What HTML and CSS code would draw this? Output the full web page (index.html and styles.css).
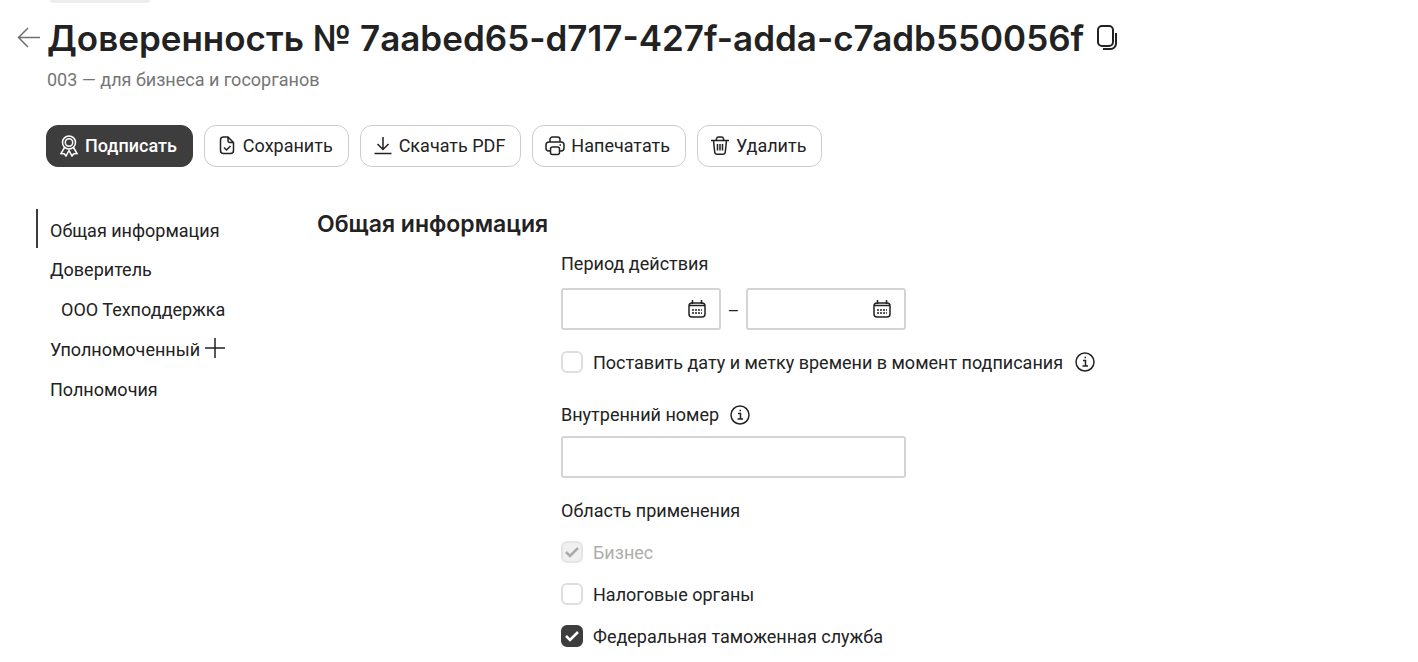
FILE: index.html
```html
<!DOCTYPE html>
<html lang="ru">
  <head>
    <meta charset="utf-8">
    <meta name="viewport" content="width=device-width, initial-scale=1">
    <title>Доверенность</title>
    <link rel="stylesheet" href="styles.css">
  </head>
  <body>
    <header class="header">
      <div class="status"></div>
      <div class="title-row">
        <a class="back" href="#" aria-label="Назад">
          <svg width="24" height="24" viewBox="0 0 24 24"><path d="M23 11.500H2M11 2L1.500 11.500 11 21"/></svg>
        </a>
        <h1 class="title">Доверенность № 7aabed65-d717-427f-adda-c7adb550056f</h1>
        <button class="copy" type="button" aria-label="Скопировать">
          <svg width="22" height="26" viewBox="0 0 22 26"><rect x="2" y="1" width="15" height="20" rx="4"/><path d="M20 8v10.500a5.500 5.500 0 0 1-5.500 5.500H7"/></svg>
        </button>
      </div>
      <p class="subtitle">003 — для бизнеса и госорганов</p>
    </header>

    <div class="toolbar">
      <button class="btn btn-dark" type="button">
        <svg width="20" height="22" viewBox="0 0 20 22"><circle cx="10" cy="7.500" r="6.500"/><circle cx="10" cy="7.500" r="3.700"/><path d="M5.500 12.500L2 18.500l3.200.2L7 21l3-5.500 3 5.500 1.800-2.300 3.200-.2-3.500-6"/></svg>
        Подписать
      </button>
      <button class="btn" type="button">
        <svg width="20" height="22" viewBox="0 0 20 22"><path d="M11 2H6.500a3 3 0 0 0-3 3v10.500a3 3 0 0 0 3 3h7a3 3 0 0 0 3-3V7.500zv3.500a2 2 0 0 0 2 2h3.500M7 12.500l2.500 2.500 4-4"/></svg>
        Сохранить
      </button>
      <button class="btn" type="button">
        <svg width="20" height="22" viewBox="0 0 20 22"><path d="M10 2v12.500M4.500 9l5.500 5.500L15.500 9M1.500 18.500h17"/></svg>
        Скачать PDF
      </button>
      <button class="btn" type="button">
        <svg width="20" height="22" viewBox="0 0 20 22"><path d="M5 7V4.500A2.500 2.500 0 0 1 7.500 2h5A2.500 2.500 0 0 1 15 4.500V7M5.500 16H4a3 3 0 0 1-3-3v-3a3 3 0 0 1 3-3h12a3 3 0 0 1 3 3v3a3 3 0 0 1-3 3h-1.500M14.500 10h1.500"/><rect x="5.500" y="12" width="9" height="7.500" rx="2"/></svg>
        Напечатать
      </button>
      <button class="btn" type="button">
        <svg width="20" height="22" viewBox="0 0 20 22"><path d="M1 5.500h18M6 5.500l.8-2.500a1.500 1.500 0 0 1 1.400-1h3.600a1.500 1.500 0 0 1 1.400 1l.8 2.500M3.500 5.500l1.200 11.500a2.500 2.500 0 0 0 2.500 2.200h5.600a2.500 2.500 0 0 0 2.500-2.200l1.200-11.500M7.500 9v6.500M10 9v6.500M12.500 9v6.500"/></svg>
        Удалить
      </button>
    </div>

    <div class="content">
      <nav class="menu">
        <a class="menu-item active" href="#general">Общая информация</a>
        <a class="menu-item" href="#">Доверитель</a>
        <a class="menu-item sub" href="#">ООО Техподдержка</a>
        <div class="menu-row">
          <a class="menu-item" href="#">Уполномоченный</a>
          <button class="add" type="button" aria-label="Добавить">
            <svg width="20" height="20" viewBox="0 0 20 20"><path d="M10 0v20M0 10h20"/></svg>
          </button>
        </div>
        <a class="menu-item" href="#">Полномочия</a>
      </nav>

      <main class="main" id="general">
        <h2 class="section-title">Общая информация</h2>
        <form class="form">
          <label class="label" for="date-from">Период действия</label>
          <div class="period">
            <div class="date">
              <input class="input" type="text" id="date-from">
              <button class="calendar" type="button" aria-label="Открыть календарь">
                <svg width="18" height="18" viewBox="0 0 18 18"><rect x="1" y="3" width="16" height="14" rx="3"/><path d="M1 5.500h16M4.500 0v4M13.500 0v4"/><path class="dots" d="M4 10h10M4 13h10"/></svg>
              </button>
            </div>
            <span class="dash">–</span>
            <div class="date">
              <input class="input" type="text" id="date-to" aria-label="Дата окончания">
              <button class="calendar" type="button" aria-label="Открыть календарь">
                <svg width="18" height="18" viewBox="0 0 18 18"><rect x="1" y="3" width="16" height="14" rx="3"/><path d="M1 5.500h16M4.500 0v4M13.500 0v4"/><path class="dots" d="M4 10h10M4 13h10"/></svg>
              </button>
            </div>
          </div>
          <div class="check-row stamp">
            <input class="checkbox" type="checkbox" id="stamp">
            <label for="stamp">Поставить дату и метку времени в момент подписания</label>
            <button class="info" type="button" aria-label="Подсказка">
              <svg width="20" height="20" viewBox="0 0 20 20"><circle cx="10" cy="10" r="9"/><path d="M8 8.500h2.500V14M7.500 14h5.500M9.500 5.500h1.500"/></svg>
            </button>
          </div>

          <div class="label-row">
            <label class="label" for="number">Внутренний номер</label>
            <button class="info" type="button" aria-label="Подсказка">
              <svg width="20" height="20" viewBox="0 0 20 20"><circle cx="10" cy="10" r="9"/><path d="M8 8.500h2.500V14M7.500 14h5.500M9.500 5.500h1.500"/></svg>
            </button>
          </div>
          <input class="input number" type="text" id="number">

          <fieldset class="scope">
            <legend class="label">Область применения</legend>
            <div class="check-row">
              <input class="checkbox" type="checkbox" id="business" checked disabled>
              <label for="business">Бизнес</label>
            </div>
            <div class="check-row">
              <input class="checkbox" type="checkbox" id="tax">
              <label for="tax">Налоговые органы</label>
            </div>
            <div class="check-row">
              <input class="checkbox" type="checkbox" id="customs" checked>
              <label for="customs">Федеральная таможенная служба</label>
            </div>
          </fieldset>
        </form>
      </main>
    </div>
  </body>
</html>
```

FILE: styles.css
```css
* {
  margin: 0;
  padding: 0;
  box-sizing: border-box;
}
body {
  background-color: #fff;
  color: #222;
  font-family: Roboto, "Liberation Sans", sans-serif;
  font-size: 18px;
  line-height: 24px;
}
button,
input {
  font: inherit;
  color: inherit;
}
button {
  background: none;
  border: none;
  cursor: pointer;
}
a {
  color: inherit;
  text-decoration: none;
}
svg {
  display: block;
  flex: none;
  fill: none;
  stroke: currentColor;
  stroke-width: 1.5;
}
.header {
  padding-left: 47px;
}
.status {
  width: 100px;
  height: 3px;
  margin-left: 3px;
  background-color: #eee;
  border-radius: 0 0 8px 8px;
}
.title-row {
  display: flex;
  align-items: center;
  margin: 11px 0 0 -30px;
}
.back {
  width: 30px;
  color: #707070;
}
.title {
  font-family: Inter, "Liberation Sans", sans-serif;
  font-size: 35px;
  line-height: 48px;
  font-weight: 600;
}
.copy {
  margin-left: 12px;
}
.copy svg {
  stroke-width: 2;
}
.subtitle {
  margin-top: 6px;
  color: #757575;
}
.toolbar {
  display: flex;
  flex-wrap: wrap;
  gap: 11px;
  padding: 33px 0 0 46px;
}
.btn {
  display: flex;
  align-items: center;
  gap: 6px;
  height: 42px;
  padding: 0 15px 0 12px;
  border: 1px solid #ccc;
  border-radius: 12px;
}
.btn-dark {
  background-color: #3d3d3d;
  border-color: #3d3d3d;
  color: #fff;
  font-weight: 500;
}
.content {
  display: flex;
  padding: 42px 0 0 36px;
}
.menu {
  width: 281px;
}
.menu-item {
  display: block;
  padding: 10px 0 6px 14px;
}
.active {
  padding: 10px 0 5px 12px;
  border-left: 2px solid #3d3d3d;
}
.sub {
  padding-left: 25px;
}
.menu-row {
  display: flex;
  align-items: center;
  gap: 5px;
}
.main {
  flex: 1;
}
.section-title {
  font-family: Inter, "Liberation Sans", sans-serif;
  font-size: 23px;
  line-height: 30px;
  font-weight: 600;
}
.form {
  padding: 13px 0 12px 244px;
}
.label {
  display: block;
}
.period {
  display: flex;
  align-items: center;
  margin-top: 12px;
}
.date {
  display: flex;
  align-items: center;
  position: relative;
  width: 160px;
}
.input {
  width: 100%;
  height: 42px;
  padding: 0 12px;
  border: 2px solid #d4d4d4;
  border-radius: 3px;
  background-color: #fff;
}
.calendar {
  position: absolute;
  right: 15px;
}
.dots {
  stroke-dasharray: 2 1;
}
.dash {
  width: 25px;
  padding-top: 4px;
  text-align: center;
}
.check-row,
.label-row {
  display: flex;
  align-items: center;
}
.check-row {
  gap: 10px;
}
.check-row label {
  padding-top: 2px;
}
.stamp {
  margin-top: 19px;
}
.checkbox {
  appearance: none;
  flex: none;
  width: 22px;
  height: 22px;
  border: 2px solid #dedede;
  border-radius: 6px;
}
.checkbox:checked {
  border-color: #3d3d3d;
  background: #3d3d3d url("data:image/svg+xml,%3Csvg xmlns='http://www.w3.org/2000/svg' viewBox='0 0 18 18'%3E%3Cpath d='M3 9l4 4 8-8' fill='none' stroke='white' stroke-width='2.500'/%3E%3C/svg%3E") center / 18px no-repeat;
}
.checkbox:disabled {
  border-color: #e5e5e5;
  background: #f0f0f0 url("data:image/svg+xml,%3Csvg xmlns='http://www.w3.org/2000/svg' viewBox='0 0 18 18'%3E%3Cpath d='M3 9l4 4 8-8' fill='none' stroke='%23aaa' stroke-width='2.500'/%3E%3C/svg%3E") center / 18px no-repeat;
}
.checkbox:disabled + label {
  color: #adadad;
}
.info {
  margin-left: 2px;
}
.label-row {
  gap: 9px;
  margin-top: 28px;
}
.number {
  max-width: 345px;
  margin-top: 9px;
}
.scope {
  margin-top: 21px;
  border: none;
}
.scope .check-row {
  margin-top: 16px;
}
```
